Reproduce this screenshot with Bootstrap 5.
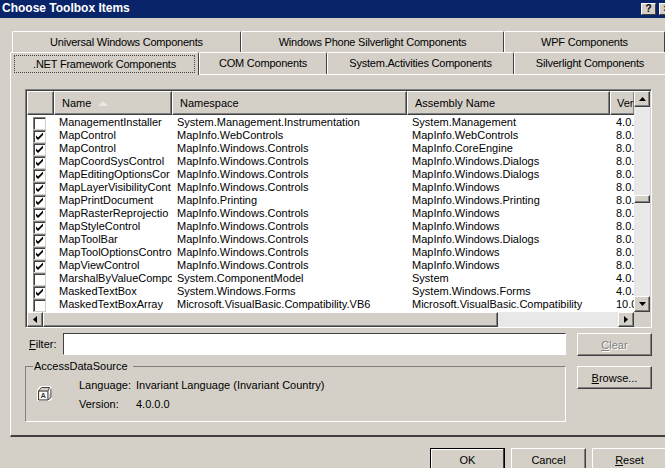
<!DOCTYPE html>
<html lang="en">
<head>
<meta charset="utf-8">
<title>Choose Toolbox Items</title>
<link rel="stylesheet" href="https://cdn.jsdelivr.net/npm/bootstrap@5.3.0/dist/css/bootstrap.min.css">
<style>
html,body{width:665px;height:468px;overflow:hidden}
body{background:#d4d0c8;color:#000;font:11px/13px "Liberation Sans",sans-serif;letter-spacing:0}
.tbar{height:18px;background:#0a246a;color:#fff;font-weight:700;font-size:12px;line-height:17px;padding-left:2px}
.capbtn{width:15px;height:12px;margin-top:3px;background:#d4d0c8;color:#000;border:1px solid;border-color:#fff #404040 #404040 #fff;font-size:10px;line-height:10px;text-align:center;flex:none;margin-left:3px}
.capgroup{margin-right:-9px}
.tabline{height:21px}
.tabline.first{margin-top:13px;padding-left:12px}
.tabline.second{padding-left:10px;margin-top:0;height:22px}
.tbi{height:100%;border:0;border-top:1px solid #fff;border-left:1px solid #fff;border-right:1px solid #404040;border-radius:2px 2px 0 0;color:#000;background:#d4d0c8;text-align:center;line-height:20px;padding:0;flex:none;letter-spacing:-.22px}
.w1{width:229px}.w2{width:263px}.w3{width:161px}
.w4{width:189px}.w5{width:128px}.w6{width:187px}.w7{width:152px}
.w4.active{position:relative;z-index:2;height:23px;margin-bottom:-1px;padding:2px 3px 0;background:#d4d0c8}
.dotbox{display:block;height:18px;border:1px dotted #404040;line-height:16px}
.panel-box{margin-left:10px;width:660px;height:363px;border-top:1px solid #fff;border-left:1px solid #fff;border-bottom:2px solid #404040;padding:14px 0 0 14px}
.lv-frame{width:627px;height:239px;border:1px solid;border-color:#808080 #fff #fff #808080;box-shadow:inset 1px 1px 0 #404040;padding:1px 1px 0 1px}
.lv-area{width:608px;height:221px;overflow:hidden;background:#fff}
.lv-head{height:24px;background:#d4d0c8}
.hc{height:24px;border:1px solid;border-color:#fff #404040 #404040 #fff;box-shadow:inset -1px -1px 0 #808080;padding-left:7px;line-height:22px;flex:none;overflow:hidden;white-space:nowrap}
.lv-body{padding-top:2px}
.lv-r{height:13px;line-height:11px}
.lc{flex:none;overflow:hidden;white-space:nowrap;padding-left:5px;height:13px}
.c0{width:27px;padding:0 0 0 6px}.c1{width:118px}.c2{width:235px}.c3{width:203px}.c4{width:25px;padding-left:6px}
.hc.c0{padding:0}
.cb{display:block;width:13px;height:13px;background:#fff;border:1px solid;border-color:#808080 #d4d0c8 #d4d0c8 #808080;box-shadow:inset 1px 1px 0 #404040}
.cb svg{display:block;margin:1px}
.sort{display:inline-block;width:0;height:0;border:5px solid transparent;border-top:0;border-bottom:5px solid #e8e6e1;margin-left:7px;vertical-align:1px}
.vscroll{width:16px;height:221px;background:#e8e8e8;position:relative}
.hscroll{height:15px;width:607px;background:#e8e8e8}
.sbtn{width:16px;background:#d4d0c8;border:1px solid;border-color:#fff #404040 #404040 #fff;box-shadow:inset -1px -1px 0 #808080;flex:none}
.sbtn.v{height:16px}.sbtn.h{height:15px}
.sthumb-v{height:8px;width:16px;background:#d4d0c8;border:1px solid;border-color:#fff #404040 #404040 #fff;box-shadow:inset -1px -1px 0 #808080;flex:none;margin-top:88px}
.vtrack-fill{flex:1}
.sthumb-h{width:455px;background:#d4d0c8;border:1px solid;border-color:#fff #404040 #404040 #fff;box-shadow:inset -1px -1px 0 #808080;flex:none}
.filter-row{margin-top:5px;height:23px}
.flabel{width:38px;padding-left:4px;flex:none;line-height:23px}
.finput.form-control{width:503px;height:22px;border:1px solid;border-color:#404040 #fff #fff #404040;box-shadow:none;border-radius:0;background:#fff;padding:0;flex:none}
.wbtn.btn{width:75px;height:23px;padding:0;border:1px solid;border-color:#fff #404040 #404040 #fff;box-shadow:inset -1px -1px 0 #808080;border-radius:0;background:#d4d0c8;color:#000;font:inherit;letter-spacing:inherit;line-height:20px;flex:none}
.wbtn.dis{color:#808080;text-shadow:1px 1px 0 #fff;opacity:1}
.side{margin-left:11px}
.grp-row{margin-top:10px}
.grp{position:relative;width:541px;height:56px;border:1px solid;border-color:#808080 #fff #fff #808080;padding:9px 0 0 10px}
.grp-title{position:absolute;left:7px;top:-7px;background:#d4d0c8;padding:0 5px 0 1px;line-height:13px}
.grp-ico{width:17px;height:17px;flex:none;margin-top:9px}
.meta{margin-left:26px}
.meta-r{height:19px;line-height:19px}
.mk{width:57px}
.footer-btns{padding-left:430px;margin-top:11px}
.footer-btns .wbtn{margin-right:6px}
.okb.btn{border:1px solid #000;box-shadow:inset -1px -1px 0 #404040,inset 1px 1px 0 #fff}
u{text-underline-offset:1px}
</style>
</head>
<body>
<svg width="0" height="0" class="position-absolute"><symbol id="tick" viewBox="0 0 9 9"><path d="M1 3.500l2 2 5-5v2.500l-5 5-2-2z" fill="#000"/></symbol></svg>

<div class="tbar d-flex justify-content-between">
  <span>Choose Toolbox Items</span>
  <div class="d-flex capgroup"><div class="capbtn fw-bold">?</div><div class="capbtn fw-bold">×</div></div>
</div>

<div class="tabline first d-flex">
  <div class="tbi w1">Universal Windows Components</div>
  <div class="tbi w2 ms-0">Windows Phone Silverlight Components</div>
  <div class="tbi w3">WPF Components</div>
</div>
<div class="tabline second d-flex">
  <div class="tbi w4 active"><span class="dotbox">.NET Framework Components</span></div>
  <div class="tbi w5">COM Components</div>
  <div class="tbi w6">System.Activities Components</div>
  <div class="tbi w7">Silverlight Components</div>
</div>

<div class="panel-box">
  <div class="lv-frame">
    <div class="d-flex">
      <div class="lv-area">
        <div class="lv-head d-flex">
          <div class="hc c0"></div>
          <div class="hc c1">Name<span class="sort"></span></div>
          <div class="hc c2">Namespace</div>
          <div class="hc c3">Assembly Name</div>
          <div class="hc c4">Version</div>
        </div>
        <div class="lv-body">
          <div class="lv-r d-flex"><div class="lc c0"><span class="cb"></span></div><div class="lc c1">ManagementInstaller</div><div class="lc c2">System.Management.Instrumentation</div><div class="lc c3">System.Management</div><div class="lc c4">4.0.0.0</div></div>
          <div class="lv-r d-flex"><div class="lc c0"><span class="cb"><svg width="9" height="9"><use href="#tick"/></svg></span></div><div class="lc c1">MapControl</div><div class="lc c2">MapInfo.WebControls</div><div class="lc c3">MapInfo.WebControls</div><div class="lc c4">8.0.0.0</div></div>
          <div class="lv-r d-flex"><div class="lc c0"><span class="cb"><svg width="9" height="9"><use href="#tick"/></svg></span></div><div class="lc c1">MapControl</div><div class="lc c2">MapInfo.Windows.Controls</div><div class="lc c3">MapInfo.CoreEngine</div><div class="lc c4">8.0.0.0</div></div>
          <div class="lv-r d-flex"><div class="lc c0"><span class="cb"><svg width="9" height="9"><use href="#tick"/></svg></span></div><div class="lc c1">MapCoordSysControl</div><div class="lc c2">MapInfo.Windows.Controls</div><div class="lc c3">MapInfo.Windows.Dialogs</div><div class="lc c4">8.0.0.0</div></div>
          <div class="lv-r d-flex"><div class="lc c0"><span class="cb"><svg width="9" height="9"><use href="#tick"/></svg></span></div><div class="lc c1">MapEditingOptionsCor</div><div class="lc c2">MapInfo.Windows.Controls</div><div class="lc c3">MapInfo.Windows.Dialogs</div><div class="lc c4">8.0.0.0</div></div>
          <div class="lv-r d-flex"><div class="lc c0"><span class="cb"><svg width="9" height="9"><use href="#tick"/></svg></span></div><div class="lc c1">MapLayerVisibilityCont</div><div class="lc c2">MapInfo.Windows.Controls</div><div class="lc c3">MapInfo.Windows</div><div class="lc c4">8.0.0.0</div></div>
          <div class="lv-r d-flex"><div class="lc c0"><span class="cb"><svg width="9" height="9"><use href="#tick"/></svg></span></div><div class="lc c1">MapPrintDocument</div><div class="lc c2">MapInfo.Printing</div><div class="lc c3">MapInfo.Windows.Printing</div><div class="lc c4">8.0.0.0</div></div>
          <div class="lv-r d-flex"><div class="lc c0"><span class="cb"><svg width="9" height="9"><use href="#tick"/></svg></span></div><div class="lc c1">MapRasterReprojectio</div><div class="lc c2">MapInfo.Windows.Controls</div><div class="lc c3">MapInfo.Windows</div><div class="lc c4">8.0.0.0</div></div>
          <div class="lv-r d-flex"><div class="lc c0"><span class="cb"><svg width="9" height="9"><use href="#tick"/></svg></span></div><div class="lc c1">MapStyleControl</div><div class="lc c2">MapInfo.Windows.Controls</div><div class="lc c3">MapInfo.Windows</div><div class="lc c4">8.0.0.0</div></div>
          <div class="lv-r d-flex"><div class="lc c0"><span class="cb"><svg width="9" height="9"><use href="#tick"/></svg></span></div><div class="lc c1">MapToolBar</div><div class="lc c2">MapInfo.Windows.Controls</div><div class="lc c3">MapInfo.Windows.Dialogs</div><div class="lc c4">8.0.0.0</div></div>
          <div class="lv-r d-flex"><div class="lc c0"><span class="cb"><svg width="9" height="9"><use href="#tick"/></svg></span></div><div class="lc c1">MapToolOptionsContro</div><div class="lc c2">MapInfo.Windows.Controls</div><div class="lc c3">MapInfo.Windows</div><div class="lc c4">8.0.0.0</div></div>
          <div class="lv-r d-flex"><div class="lc c0"><span class="cb"><svg width="9" height="9"><use href="#tick"/></svg></span></div><div class="lc c1">MapViewControl</div><div class="lc c2">MapInfo.Windows.Controls</div><div class="lc c3">MapInfo.Windows</div><div class="lc c4">8.0.0.0</div></div>
          <div class="lv-r d-flex"><div class="lc c0"><span class="cb"></span></div><div class="lc c1">MarshalByValueCompc</div><div class="lc c2">System.ComponentModel</div><div class="lc c3">System</div><div class="lc c4">4.0.0.0</div></div>
          <div class="lv-r d-flex"><div class="lc c0"><span class="cb"><svg width="9" height="9"><use href="#tick"/></svg></span></div><div class="lc c1">MaskedTextBox</div><div class="lc c2">System.Windows.Forms</div><div class="lc c3">System.Windows.Forms</div><div class="lc c4">4.0.0.0</div></div>
          <div class="lv-r d-flex"><div class="lc c0"><span class="cb"></span></div><div class="lc c1">MaskedTextBoxArray</div><div class="lc c2">Microsoft.VisualBasic.Compatibility.VB6</div><div class="lc c3">Microsoft.VisualBasic.Compatibility</div><div class="lc c4">10.0.0.0</div></div>
        </div>
      </div>
      <div class="vscroll d-flex flex-column">
        <div class="sbtn v d-flex align-items-center justify-content-center"><svg width="7" height="4"><path d="M3.5 0L7 4H0z"/></svg></div>
        <div class="sthumb-v"></div>
        <div class="vtrack-fill"></div>
        <div class="sbtn v d-flex align-items-center justify-content-center"><svg width="7" height="4"><path d="M0 0h7L3.500 4z"/></svg></div>
      </div>
    </div>
    <div class="hscroll d-flex">
      <div class="sbtn h d-flex align-items-center justify-content-center"><svg width="4" height="7"><path d="M4 0v7L0 3.500z"/></svg></div>
      <div class="sthumb-h"></div>
      <div class="flex-grow-1"></div>
      <div class="sbtn h d-flex align-items-center justify-content-center"><svg width="4" height="7"><path d="M0 0l4 3.500L0 7z"/></svg></div>
    </div>
  </div>

  <div class="filter-row d-flex">
    <div class="flabel"><u>F</u>ilter:</div>
    <input class="finput form-control" type="text" aria-label="Filter">
    <button class="wbtn btn dis side" type="button"><u>C</u>lear</button>
  </div>

  <div class="grp-row d-flex">
    <div class="grp d-flex">
      <span class="grp-title">AccessDataSource</span>
      <svg class="grp-ico" viewBox="0 0 17 17"><path d="M1 5l3-4h10l2 2v11l-2 2H1z" fill="#fff"/><path d="M2.500 6V15H12V6zM2.500 6l3-3.500H13.500L12 6M12 15l3-2.500V3.500" fill="#d4d0c8" stroke="#404040"/><rect x="3.500" y="7" width="7.500" height="7" fill="#fff"/><text x="7.200" y="13" font-size="7.500" font-weight="700" text-anchor="middle" font-family="Liberation Sans" fill="#404040">A</text></svg>
      <div class="meta">
        <div class="meta-r d-flex"><div class="mk">Language:</div><div>Invariant Language (Invariant Country)</div></div>
        <div class="meta-r d-flex"><div class="mk">Version:</div><div>4.0.0.0</div></div>
      </div>
    </div>
    <button class="wbtn btn side" type="button"><u>B</u>rowse...</button>
  </div>
</div>

<div class="footer-btns d-flex">
  <button class="wbtn btn okb" type="button">OK</button>
  <button class="wbtn btn" type="button">Cancel</button>
  <button class="wbtn btn" type="button"><u>R</u>eset</button>
</div>
</body>
</html>
